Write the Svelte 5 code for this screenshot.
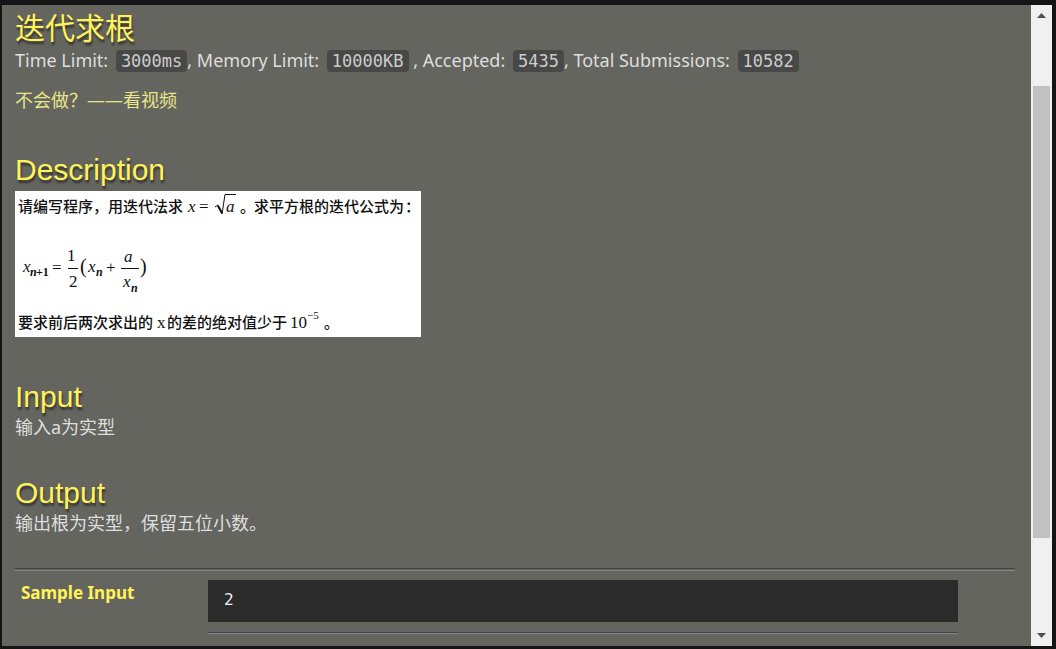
<script>
  const stats = [
    { label: 'Time Limit:', value: '3000ms', after: ', ' },
    { label: 'Memory Limit:', value: '10000KB', after: ' , ' },
    { label: 'Accepted:', value: '5435', after: ', ' },
    { label: 'Total Submissions:', value: '10582', after: '' }
  ];
</script>

<div class="frame">
  <main class="problem">
    <h1>迭代求根</h1>
    <p class="stats">
      {#each stats as s}<span>{s.label}&nbsp;<code>{s.value}</code>{s.after}</span>{/each}
    </p>
    <a class="help" href="#video">不会做？——看视频</a>

    <section class="description">
      <h2>Description</h2>
      <svg class="figure" viewBox="0 0 406 146" role="img" aria-label="Iteration formula">
        <rect width="406" height="146" fill="#fff" />
        <g class="han">
          <text x="3" y="21">请编写程序，用迭代法求</text>
          <text x="225" y="21">。</text>
          <text x="239" y="21">求平方根的迭代公式为</text>
          <text x="390" y="21">：</text>
          <text x="3" y="137">要求前后两次求出的</text>
          <text x="152" y="137">的差的绝对值少于</text>
          <text x="309" y="137">。</text>
        </g>
        <g class="math">
          <text class="var" x="173" y="21">x</text>
          <text x="184" y="21">=</text>
          <text class="var" x="211" y="21">a</text>
          <text class="var" x="8" y="81">x</text>
          <text class="sub var" x="15" y="85">n</text>
          <text class="sub" x="21" y="85">+1</text>
          <text x="37" y="82">=</text>
          <text x="52" y="70">1</text>
          <text x="54" y="96">2</text>
          <text class="paren" x="65" y="82">(</text>
          <text class="var" x="73" y="81">x</text>
          <text class="sub var" x="81" y="85">n</text>
          <text x="91" y="82">+</text>
          <text class="var" x="109" y="71">a</text>
          <text class="var" x="108" y="96">x</text>
          <text class="sub var" x="116" y="101">n</text>
          <text class="paren" x="125" y="82">)</text>
          <text x="142" y="137">x</text>
          <text x="275" y="137">10</text>
          <text class="sup" x="292" y="128">−5</text>
        </g>
        <path d="M200 16l3-2 4 9 3-19.500h11M53 77.500h10M106 77.500h18" fill="none" stroke="#111" />
        <path d="M203 15l4 7" stroke="#111" stroke-width="2" />
      </svg>
    </section>

    <section class="input">
      <h2>Input</h2>
      <p>输入a为实型</p>
    </section>

    <section class="output">
      <h2>Output</h2>
      <p>输出根为实型，保留五位小数。</p>
    </section>

    <dl class="samples">
      <dt>Sample Input</dt>
      <dd><pre>2</pre></dd>
    </dl>
  </main>

  <div class="scroll">
    <button aria-label="Scroll up"><svg viewBox="0 0 9 5"><path d="M0 5L4.500 0L9 5z" /></svg></button>
    <div class="track"><div class="thumb"></div></div>
    <button aria-label="Scroll down"><svg viewBox="0 0 9 5"><path d="M0 0L4.500 5L9 0z" /></svg></button>
  </div>
</div>

<style>
  :global(body) {
    background: #151515;
  }
  .frame {
    box-sizing: border-box;
    height: 100vh;
    padding: 5px 4px 3px 2px;
    background: #151515;
    display: flex;
  }
  .problem {
    flex: 1;
    min-width: 0;
    overflow: hidden;
    padding: 6px 16px 0 13px;
    background: #656560;
    color: #dedede;
    font: 18px/24px "Noto Sans", "Noto Sans CJK SC", sans-serif;
  }
  h1, h2 {
    margin: 0;
    color: #fff358;
    font: 30px/36px "Liberation Sans", "Noto Sans CJK SC", sans-serif;
    text-shadow: 1px 3px 2px #333;
  }
  p {
    margin: 0;
  }
  .stats {
    margin: 1px 0 16px;
    white-space: pre-wrap;
  }
  code {
    margin-left: 3px;
    padding: 1px 5px;
    border-radius: 4px;
    background: #484846;
    color: #ccc;
    font: 17px/21px "DejaVu Sans Mono", monospace;
  }
  .help {
    display: block;
    color: #e6e68a;
    text-decoration: none;
  }
  .description {
    margin-top: 40px;
  }
  .input {
    margin-top: 42px;
  }
  .output {
    margin-top: 36px;
  }
  .figure {
    display: block;
    width: 406px;
    max-width: 100%;
    margin-top: 3px;
  }
  .han {
    font: 500 15px "Noto Sans CJK SC", sans-serif;
    fill: #111;
  }
  .math {
    font: 17px "Liberation Serif", serif;
    fill: #111;
  }
  .var {
    font-style: italic;
  }
  .sub {
    font-size: 12px;
    font-weight: bold;
  }
  .sup {
    font-size: 11px;
  }
  .paren {
    font-size: 20px;
  }
  .samples {
    margin: 33px 0 0;
    padding: 9px 57px 0 6px;
    border-top: 1px solid #444;
    box-shadow: inset 0 1px #656560, inset 0 2px #858585;
    display: grid;
    grid-template-columns: 187px 1fr;
  }
  dt {
    padding-top: 3px;
    color: #fff358;
    font-size: 17px;
    font-weight: bold;
  }
  dd {
    margin: 0;
    padding: 2px 0 10px;
    border-bottom: 1px solid #444;
    box-shadow: 0 1px #858585;
  }
  pre {
    margin: 0;
    padding: 8px 16px 10px;
    background: #2b2b2b;
    color: #eee;
    font: 16px/24px "DejaVu Sans Mono", monospace;
  }
  .scroll {
    width: 21px;
    background: #f0f0f0;
    display: flex;
    flex-direction: column;
  }
  .scroll button {
    height: 21px;
    padding: 0;
    border: 0;
    background: none;
    display: grid;
    place-items: center;
  }
  .scroll svg {
    width: 9px;
    height: 5px;
    fill: #505050;
  }
  .track {
    flex: 1;
    padding: 0 2px;
    display: grid;
    grid-template-rows: 10% 75.5% 1fr;
  }
  .thumb {
    grid-row: 2;
    background: #c1c1c1;
  }
</style>
